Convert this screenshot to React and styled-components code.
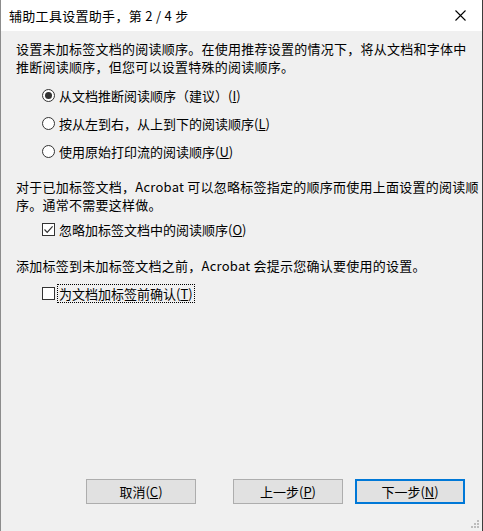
import React, { useState } from 'react';
import styled, { createGlobalStyle } from 'styled-components';

const Global = createGlobalStyle`
  html, body { margin: 0; padding: 0; background: #f0f0f0; }
  body { font-family: "Noto Sans CJK SC", "Noto Sans", sans-serif; font-size: 13px; color: #000; }
`;

const Window = styled.div`
  width: 483px;
  height: 531px;
  box-sizing: border-box;
  border-left: 1px solid #8c8c8c;
  border-right: 1px solid #3c3c3c;
  background: #f0f0f0;
  display: flex;
  flex-direction: column;
  position: relative;
`;

const TitleBar = styled.div`
  height: 31px;
  background: #fff;
  display: flex;
  align-items: center;
  justify-content: space-between;
  padding-left: 8px;
  font-size: 13px;
  letter-spacing: 0.3px;
`;

const CloseBtn = styled.div`
  width: 44px;
  height: 31px;
  display: flex;
  align-items: center;
  justify-content: center;
`;

const Content = styled.div`
  flex: 1;
  padding: 9px 0 0 15px;
  display: flex;
  flex-direction: column;
`;

const Para = styled.p`
  margin: ${p => p.$top || 0}px 0 0 0;
  line-height: 18px;
  letter-spacing: 0.25px;
  white-space: nowrap;
`;

const OptionList = styled.div`
  display: flex;
  flex-direction: column;
  gap: 6px;
  margin-top: ${p => p.$top || 0}px;
  padding-left: 26px;
`;

const Option = styled.label`
  display: flex;
  align-items: center;
  height: 22px;
  gap: 3px;
`;

const RadioDot = styled.span`
  width: 11px;
  height: 11px;
  border: 1px solid #333;
  border-radius: 50%;
  background: #fff;
  display: flex;
  align-items: center;
  justify-content: center;
  &::after {
    content: '';
    width: 7px;
    height: 7px;
    border-radius: 50%;
    background: ${p => (p.$on ? '#333' : 'transparent')};
  }
`;

const Box = styled.span`
  width: 11px;
  height: 11px;
  border: 1px solid #333;
  background: #fff;
  display: flex;
  align-items: center;
  justify-content: center;
`;

const OptText = styled.span`
  outline: ${p => (p.$focus ? '1px dotted #000' : 'none')};
  line-height: 17px;
  padding: 0 1px;
  u { text-decoration: underline; }
`;

const Footer = styled.div`
  height: 52px;
  display: flex;
  align-items: flex-start;
  padding-left: 85px;
`;

const Button = styled.button`
  width: 110px;
  height: 25px;
  box-sizing: border-box;
  background: #e1e1e1;
  border: ${p => (p.$primary ? '2px solid #0078d7' : '1px solid #adadad')};
  font-family: inherit;
  font-size: 13px;
  color: #000;
  padding: 0;
  margin-left: ${p => p.$gap || 0}px;
  cursor: default;
`;

const Grip = styled.svg`
  position: absolute;
  right: 2px;
  bottom: 2px;
`;

const radios = [
  { label: '从文档推断阅读顺序（建议）', key: 'I' },
  { label: '按从左到右，从上到下的阅读顺序', key: 'L' },
  { label: '使用原始打印流的阅读顺序', key: 'U' },
];

const Check = () => (
  <svg width="11" height="11" viewBox="0 0 11 11">
    <path d="M1.5 5.5L4.2 8.3L9.6 2.4" fill="none" stroke="#333" strokeWidth="1.2" />
  </svg>
);

export default function App() {
  const [sel, setSel] = useState(0);
  const [ignore, setIgnore] = useState(true);
  const [confirm, setConfirm] = useState(false);
  return (
    <Window>
      <Global />
      <TitleBar>
        <span>辅助工具设置助手，第 2 / 4 步</span>
        <CloseBtn>
          <svg width="11" height="11" viewBox="0 0 11 11">
            <path d="M0.5 0.5L10.5 10.5M10.5 0.5L0.5 10.5" stroke="#000" strokeWidth="1.1" />
          </svg>
        </CloseBtn>
      </TitleBar>
      <Content>
        <Para>
          设置未加标签文档的阅读顺序。在使用推荐设置的情况下，将从文档和字体中<br />
          推断阅读顺序，但您可以设置特殊的阅读顺序。
        </Para>
        <OptionList $top={8}>
          {radios.map((r, i) => (
            <Option key={r.key} onClick={() => setSel(i)}>
              <RadioDot $on={sel === i} />
              <OptText>{r.label}(<u>{r.key}</u>)</OptText>
            </Option>
          ))}
        </OptionList>
        <Para $top={16}>
          对于已加标签文档，Acrobat 可以忽略标签指定的顺序而使用上面设置的阅读顺<br />
          序。通常不需要这样做。
        </Para>
        <OptionList $top={4}>
          <Option onClick={() => setIgnore(!ignore)}>
            <Box>{ignore && <Check />}</Box>
            <OptText>忽略加标签文档中的阅读顺序(<u>O</u>)</OptText>
          </Option>
        </OptionList>
        <Para $top={17}>添加标签到未加标签文档之前，Acrobat 会提示您确认要使用的设置。</Para>
        <OptionList $top={7}>
          <Option onClick={() => setConfirm(!confirm)}>
            <Box>{confirm && <Check />}</Box>
            <OptText $focus>为文档加标签前确认(<u>T</u>)</OptText>
          </Option>
        </OptionList>
      </Content>
      <Footer>
        <Button>取消(<u>C</u>)</Button>
        <Button $gap={37}>上一步(<u>P</u>)</Button>
        <Button $gap={12} $primary>下一步(<u>N</u>)</Button>
      </Footer>
      <Grip width="12" height="12" viewBox="0 0 12 12">
        {[[9, 0], [6, 3], [9, 3], [3, 6], [6, 6], [9, 6]].map(([x, y]) => (
          <rect key={x + '-' + y} x={x} y={y + 3} width="2" height="2" fill="#bcbcbc" />
        ))}
      </Grip>
    </Window>
  );
}
